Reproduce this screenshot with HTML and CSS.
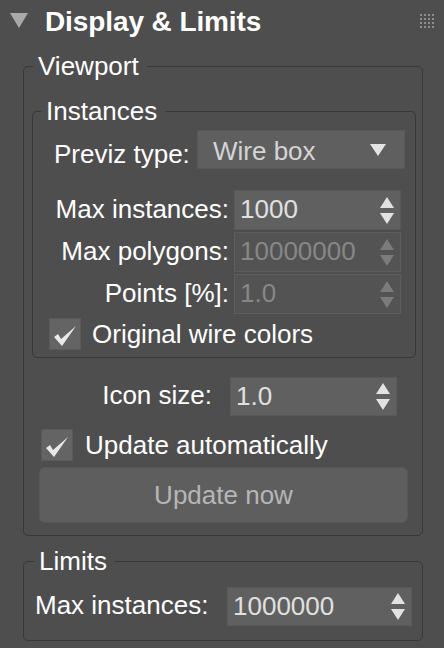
FILE: index.html
```html
<!DOCTYPE html>
<html>
<head>
<meta charset="utf-8">
<link rel="stylesheet" href="styles.css">
</head>
<body>
<div class="rollout">
  <div class="header">
    <svg class="caret" width="18" height="15" viewBox="0 0 18 15"><polygon points="0,0 18,0 9,15" fill="#a9a9a9"/></svg>
    <span class="title">Display &amp; Limits</span>
    <svg class="grip" width="14" height="14" viewBox="0 0 14 14" fill="#8d8d8d">
      <rect x="0" y="0" width="2" height="2"/><rect x="4" y="0" width="2" height="2"/><rect x="8" y="0" width="2" height="2"/><rect x="12" y="0" width="2" height="2"/>
      <rect x="0" y="4" width="2" height="2"/><rect x="4" y="4" width="2" height="2"/><rect x="8" y="4" width="2" height="2"/><rect x="12" y="4" width="2" height="2"/>
      <rect x="0" y="8" width="2" height="2"/><rect x="4" y="8" width="2" height="2"/><rect x="8" y="8" width="2" height="2"/><rect x="12" y="8" width="2" height="2"/>
      <rect x="0" y="12" width="2" height="2"/><rect x="4" y="12" width="2" height="2"/><rect x="8" y="12" width="2" height="2"/><rect x="12" y="12" width="2" height="2"/>
    </svg>
  </div>

  <fieldset class="group viewport">
    <legend>Viewport</legend>

    <fieldset class="group instances">
      <legend>Instances</legend>
      <div class="inst-body">
        <div class="previz-row">
          <span class="label previz-label">Previz type:</span>
          <div class="dropdown">
            <span class="dd-text">Wire box</span>
            <svg class="dd-arrow" width="16" height="12" viewBox="0 0 16 12"><polygon points="0,0 16,0 8,12" fill="#e4e4e4"/></svg>
          </div>
        </div>

        <div class="spin-grid">
          <span class="label">Max instances:</span>
          <div class="spinner">
            <span class="val">1000</span>
            <svg class="arrows" width="14" height="27" viewBox="0 0 14 27"><polygon points="7,0 14,11 0,11" /><polygon points="0,16 14,16 7,27"/></svg>
          </div>
          <span class="label">Max polygons:</span>
          <div class="spinner disabled">
            <span class="val">10000000</span>
            <svg class="arrows" width="14" height="27" viewBox="0 0 14 27"><polygon points="7,0 14,11 0,11" /><polygon points="0,16 14,16 7,27"/></svg>
          </div>
          <span class="label">Points [%]:</span>
          <div class="spinner disabled">
            <span class="val">1.0</span>
            <svg class="arrows" width="14" height="27" viewBox="0 0 14 27"><polygon points="7,0 14,11 0,11" /><polygon points="0,16 14,16 7,27"/></svg>
          </div>
        </div>

        <div class="check-row wire-row">
          <span class="box">
            <svg width="32" height="32" viewBox="0 0 32 32"><polygon points="5,19 9,16 12,21 27,8 13,28" fill="#e8e8e8"/></svg>
          </span>
          <span class="label">Original wire colors</span>
        </div>
      </div>
    </fieldset>

    <div class="icon-row">
      <span class="label">Icon size:</span>
      <div class="spinner">
        <span class="val">1.0</span>
        <svg class="arrows" width="14" height="27" viewBox="0 0 14 27"><polygon points="7,0 14,11 0,11" /><polygon points="0,16 14,16 7,27"/></svg>
      </div>
    </div>

    <div class="check-row auto-row">
      <span class="box">
        <svg width="32" height="32" viewBox="0 0 32 32"><polygon points="5,19 9,16 12,21 27,8 13,28" fill="#e8e8e8"/></svg>
      </span>
      <span class="label">Update automatically</span>
    </div>

    <button class="btn" type="button">Update now</button>
  </fieldset>

  <fieldset class="group limits">
    <legend>Limits</legend>
    <div class="limits-row">
      <span class="label">Max instances:</span>
      <div class="spinner limits-spin">
        <span class="val">1000000</span>
        <svg class="arrows" width="14" height="27" viewBox="0 0 14 27"><polygon points="7,0 14,11 0,11" /><polygon points="0,16 14,16 7,27"/></svg>
      </div>
    </div>
  </fieldset>
</div>
</body>
</html>
```

FILE: styles.css
```css
* { box-sizing: border-box; }

html, body {
  margin: 0;
  padding: 0;
  background: #4e4e4e;
}

body {
  width: 444px;
  height: 648px;
  overflow: hidden;
  font-family: "Liberation Sans", Arial, sans-serif;
  font-size: 26px;
  color: #ffffff;
}

.header {
  display: flex;
  align-items: center;
  height: 44px;
  padding: 0 10px;
}

.caret {
  flex: none;
  margin-bottom: 3px;
}

.title {
  margin-left: 17px;
  font-weight: bold;
  font-size: 28px;
  line-height: 44px;
  letter-spacing: -0.1px;
}

.grip {
  flex: none;
  margin-left: auto;
  margin-bottom: 3px;
}

/* group boxes */
.group {
  margin: 0;
  border: 1px solid #383838;
  border-radius: 5px;
  min-inline-size: 0;
}

.group > legend {
  font-size: 26px;
  line-height: 30px;
  padding: 0 8px 0 5px;
  color: #ffffff;
}

.viewport {
  margin: 7px 21px 0 23px;
  padding: 0 6px 12px 8px;
}

.viewport > legend {
  margin-left: 1px;
}

.instances {
  margin-top: 15px;
  padding: 0 10px 7px 8px;
}

.inst-body {
  padding-left: 8px;
}

.label {
  white-space: nowrap;
  line-height: 30px;
}

.previz-row {
  display: flex;
  align-items: center;
  gap: 7px;
  margin-top: 4px;
  padding-left: 5px;
}

.previz-label {
  padding-top: 8px;
}

.dropdown {
  display: flex;
  align-items: center;
  width: 208px;
  height: 39px;
  margin-left: auto;
  padding: 3px 18px 0 15px;
  background: #5f5f5f;
  border: 1px solid #585858;
  color: #d4d4d4;
}

.dd-text {
  line-height: 30px;
}

.dd-arrow {
  margin-left: auto;
  margin-bottom: 3px;
}

.spin-grid {
  display: grid;
  grid-template-columns: 1fr 167px;
  column-gap: 5px;
  row-gap: 2px;
  align-items: center;
  margin-top: 21px;
  margin-right: 4px;
}

.spin-grid > .label {
  text-align: right;
  margin-bottom: 3px;
}

.spinner {
  display: flex;
  align-items: center;
  height: 40px;
  padding: 0 6px 0 5px;
  background: #606060;
  border: 1px solid #595959;
  color: #e0e0e0;
  fill: #e2e2e2;
}

.spinner .val {
  line-height: 30px;
  margin-bottom: 2px;
}

.spinner .arrows {
  margin-left: auto;
  flex: none;
}

.spinner.disabled {
  background: #535353;
  border-color: #5d5d5d;
  color: #878787;
  fill: #7b7b7b;
}

.check-row {
  display: flex;
  align-items: center;
  gap: 11px;
}

.box {
  display: block;
  flex: none;
  width: 32px;
  height: 32px;
  background: #646464;
  border: 1px solid #5a5a5a;
}

.box svg {
  display: block;
  margin: -1px 0 0 -1px;
}

.wire-row {
  margin-top: 4px;
}

.icon-row {
  display: grid;
  grid-template-columns: 1fr 167px;
  column-gap: 18px;
  align-items: center;
  margin-top: 19px;
  margin-right: 19px;
}

.icon-row > .label {
  text-align: right;
  margin-bottom: 3px;
}

.icon-row .spinner {
  height: 39px;
}

.auto-row {
  margin-top: 13px;
  margin-left: 9px;
  gap: 12px;
}

.btn {
  display: block;
  width: 369px;
  height: 56px;
  margin: 6px 0 0 7px;
  padding: 0;
  background: #5e5e5e;
  border: 1px solid #585858;
  border-radius: 6px;
  font-family: "Liberation Sans", Arial, sans-serif;
  font-size: 26px;
  color: #b6b6b6;
}

.limits {
  margin: 10px 21px 0 23px;
  padding: 0 10px 14px 10px;
}

.limits-row {
  display: flex;
  align-items: center;
  margin-top: 11px;
  padding-left: 1px;
}

.limits-row > .label {
  margin-bottom: 3px;
}

.limits-spin {
  width: 185px;
  height: 39px;
  margin-left: auto;
}
```
